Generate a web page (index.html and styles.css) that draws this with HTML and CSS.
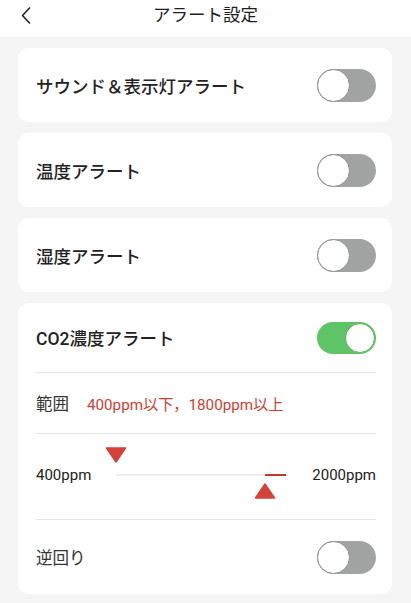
FILE: index.html
```html
<!DOCTYPE html>
<html lang="ja">
<head>
<meta charset="utf-8">
<title>アラート設定</title>
<link rel="stylesheet" href="styles.css">
</head>
<body>
<header class="header">
  <svg class="back" width="10" height="17" viewBox="0 0 10 17"><path d="M8.5 1 L1.5 8.5 L8.5 16" fill="none" stroke="#222" stroke-width="1.6" stroke-linecap="round" stroke-linejoin="round"/></svg>
  <h1 class="title">アラート設定</h1>
</header>
<main class="list">
  <section class="card">
    <div class="row row-simple">
      <span class="label">サウンド＆表示灯アラート</span>
      <span class="toggle"><span class="knob"></span></span>
    </div>
  </section>
  <section class="card">
    <div class="row row-simple">
      <span class="label">温度アラート</span>
      <span class="toggle"><span class="knob"></span></span>
    </div>
  </section>
  <section class="card">
    <div class="row row-simple">
      <span class="label">湿度アラート</span>
      <span class="toggle"><span class="knob"></span></span>
    </div>
  </section>
  <section class="card card-co2">
    <div class="row row-co2">
      <span class="label">CO2濃度アラート</span>
      <span class="toggle on"><span class="knob"></span></span>
    </div>
    <div class="row row-range">
      <span class="sub">範囲</span>
      <span class="range-text">400ppm以下，1800ppm以上</span>
    </div>
    <div class="row row-slider">
      <span class="tick">400ppm</span>
      <div class="slider">
        <div class="seg" style="left:87.5%;right:0"></div>
        <svg class="thumb thumb-down" style="left:0%" width="22" height="16" viewBox="0 0 22 16"><path d="M1.5 1 H20.5 L11 15 Z" fill="#d4423a" stroke="#d4423a" stroke-width="1.5" stroke-linejoin="round"/></svg>
        <svg class="thumb thumb-up" style="left:87.5%" width="22" height="16" viewBox="0 0 22 16"><path d="M1.5 15 H20.5 L11 1 Z" fill="#d4423a" stroke="#d4423a" stroke-width="1.5" stroke-linejoin="round"/></svg>
      </div>
      <span class="tick">2000ppm</span>
    </div>
    <div class="row row-reverse">
      <span class="sub">逆回り</span>
      <span class="toggle"><span class="knob"></span></span>
    </div>
  </section>
</main>
</body>
</html>
```

FILE: styles.css
```css
* { box-sizing: border-box; }
html, body {
  margin: 0;
  padding: 0;
}
body {
  background: #f5f5f5;
  font-family: Roboto, "Noto Sans CJK JP", sans-serif;
  color: #222;
  width: 411px;
  height: 603px;
  overflow: hidden;
}
.header {
  height: 37px;
  background: #fff;
  position: relative;
  display: flex;
  justify-content: center;
}
.back {
  position: absolute;
  left: 21px;
  top: 7px;
}
.title {
  margin: 0;
  font-size: 17.5px;
  font-weight: 400;
  line-height: 30px;
  color: #1e1e1e;
}
.list {
  display: flex;
  flex-direction: column;
  gap: 11px;
  padding: 11px 19px 0 18px;
}
.card {
  background: #fff;
  border-radius: 11px;
  padding: 0 16px 0 18px;
}
.row {
  display: flex;
  align-items: center;
}
.row-simple {
  height: 74px;
  justify-content: space-between;
}
.label {
  font-size: 17.5px;
  font-weight: 500;
  color: #222;
}
.toggle {
  width: 59px;
  height: 33px;
  border-radius: 17px;
  background: #a2a4a4;
  position: relative;
  display: block;
}
.toggle .knob {
  position: absolute;
  left: 0;
  top: 0;
  width: 33px;
  height: 33px;
  border-radius: 50%;
  background: #fff;
  border: 1px solid #8c8c8c;
}
.toggle.on {
  background: #5ec465;
  height: 32px;
}
.toggle.on .knob {
  left: auto;
  right: 1px;
  top: 1px;
  width: 30px;
  height: 30px;
  border: 1px solid #4fb456;
}
.row-co2 {
  height: 70px;
  justify-content: space-between;
  border-bottom: 1px solid #e6e6e6;
}
.row-range {
  height: 61px;
  border-bottom: 1px solid #e6e6e6;
  gap: 18px;
}
.sub {
  font-size: 16.5px;
  color: #333;
}
.range-text {
  font-size: 15.2px;
  color: #cf3e34;
}
.row-slider {
  height: 86px;
  border-bottom: 1px solid #e6e6e6;
}
.tick {
  font-size: 15px;
  color: #222;
  margin-top: -4px;
}
.slider {
  flex: 1;
  height: 2px;
  background: #efefef;
  margin: -4px 26px 0 25px;
  position: relative;
}
.seg {
  position: absolute;
  top: 0;
  height: 2px;
  background: #c9372d;
}
.thumb {
  position: absolute;
  transform: translateX(-50%);
}
.thumb-down {
  top: -27px;
}
.thumb-up {
  top: 9px;
}
.row-reverse {
  height: 74px;
  justify-content: space-between;
}
```
